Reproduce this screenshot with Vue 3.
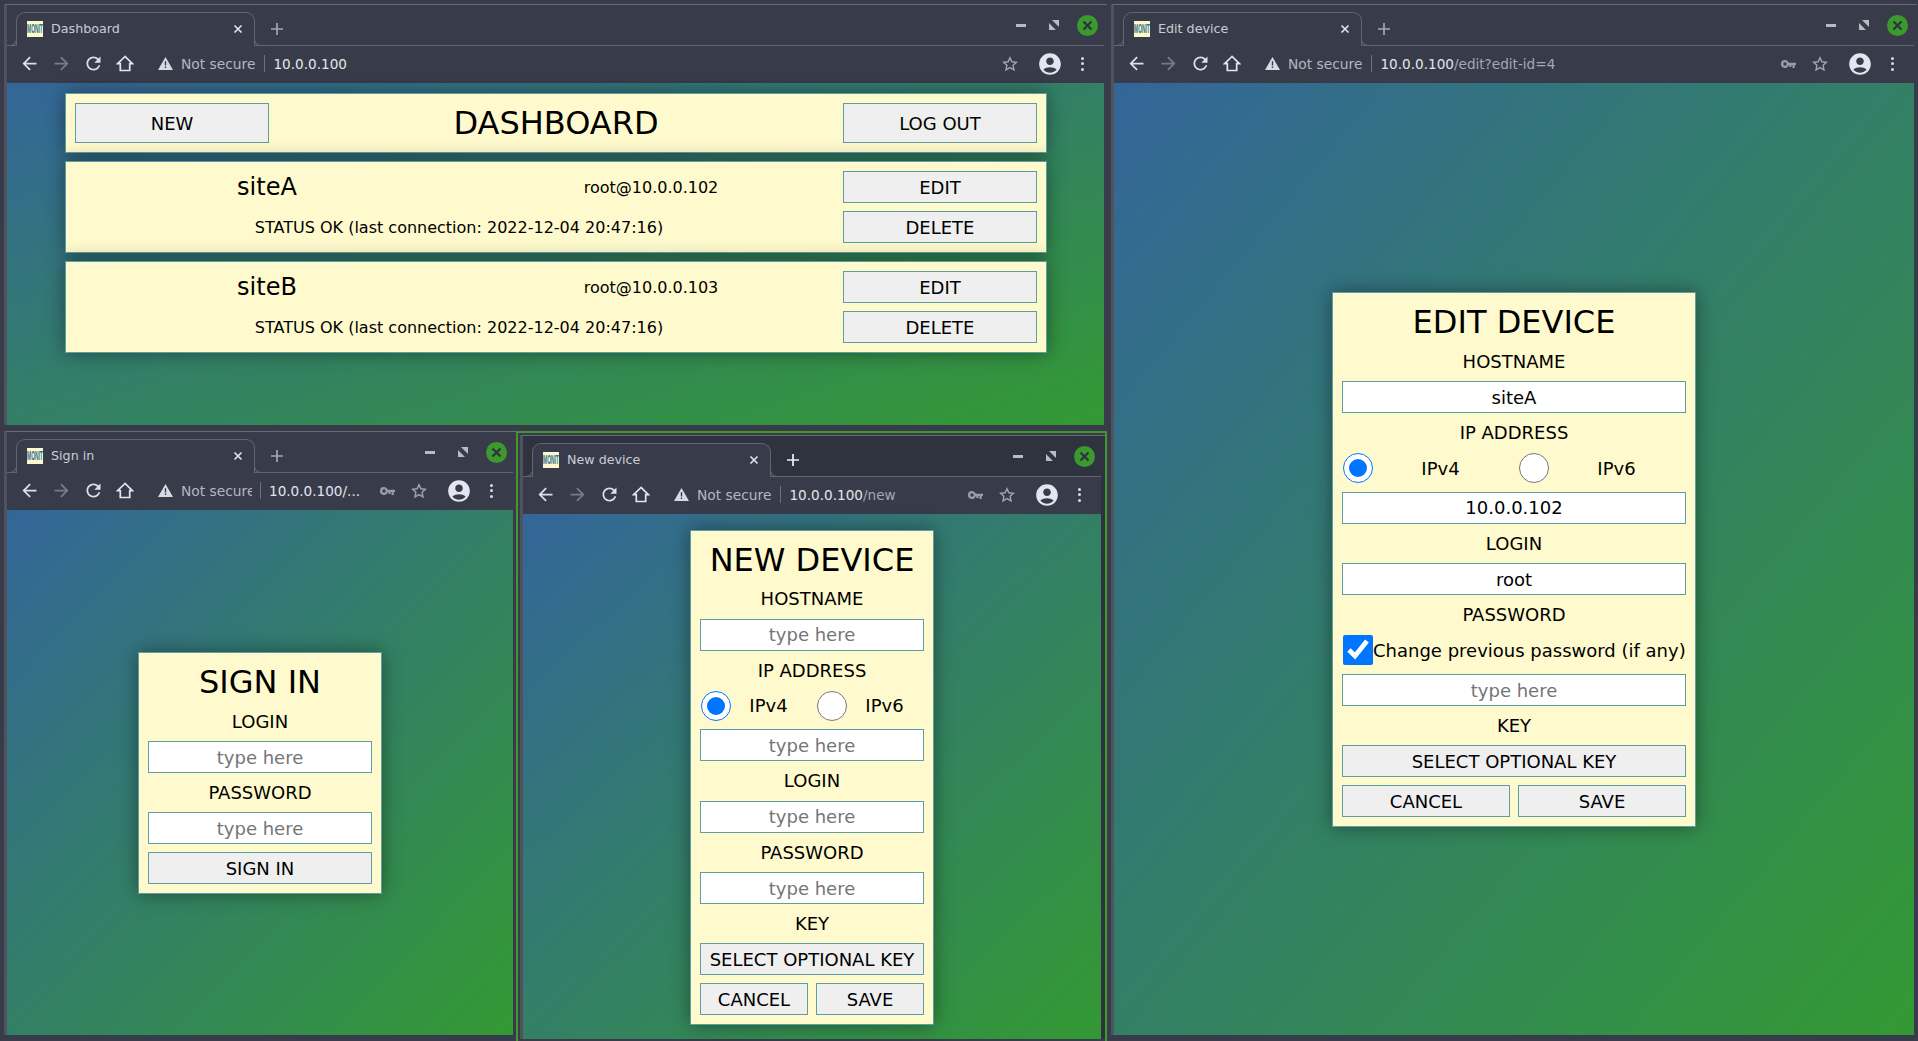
<script setup>
const windows = [
    { id: "dashboard", title: "Dashboard", host: "10.0.0.100", path: "" },
    { id: "edit", title: "Edit device", host: "10.0.0.100", path: "/edit?edit-id=4", hasKey: true },
    { id: "signin", title: "Sign in", host: "10.0.0.100", path: "/...", hasKey: true, clipped: true },
    { id: "new", title: "New device", host: "10.0.0.100", path: "/new", hasKey: true, active: true },
];

const sites = [
    { name: "siteA", target: "root@10.0.0.102" },
    { name: "siteB", target: "root@10.0.0.103" },
];
const lastConnection = "STATUS OK (last connection: 2022-12-04 20:47:16)";

const forms = {
    new: { heading: "NEW DEVICE", hostname: "", address: "", login: "" },
    edit: { heading: "EDIT DEVICE", hostname: "siteA", address: "10.0.0.102", login: "root", changePassword: true },
};
</script>

<template>
    <div class="desktop">
        <section
            v-for="win in windows"
            :key="win.id"
            class="window"
            :class="['window-' + win.id, { active: win.active }]"
        >
            <div class="frame">
                <div class="tabstrip">
                    <div class="tab">
                        <svg class="favicon" viewBox="0 0 16 16" width="16" height="16">
                            <rect width="16" height="16" fill="#fff8cd" />
                            <text x="0.1" y="4.7" font-size="4.9" font-family="Liberation Sans, sans-serif" font-weight="bold" fill="#2b6f8c" transform="scale(1 2.5)">MONIT</text>
                        </svg>
                        <span class="tab-title">{{ win.title }}</span>
                        <svg class="tab-close" viewBox="0 0 10 10" width="10" height="10">
                            <path d="M1.5 1.5l7 7M8.5 1.5l-7 7" stroke="#dfe1ea" stroke-width="1.7" fill="none" />
                        </svg>
                    </div>
                    <svg class="tab-new" viewBox="0 0 12 12" width="12" height="12">
                        <path d="M6 0v12M0 6h12" stroke-width="1.7" fill="none" />
                    </svg>
                    <div class="controls">
                        <span class="minimize"></span>
                        <svg class="restore" viewBox="0 0 10 10" width="10" height="10">
                            <path d="M3 0h7v7zM0 3l7 7H0z" fill="#b9bbc3" />
                        </svg>
                        <svg class="close" viewBox="0 0 21 21" width="21" height="21">
                            <circle cx="10.5" cy="10.5" r="10.5" fill="#3b992e" />
                            <path d="M6.5 6.5l8 8M14.5 6.5l-8 8" stroke="#2f3340" stroke-width="2.3" fill="none" />
                        </svg>
                    </div>
                </div>

                <div class="toolbar">
                    <span class="tool">
                        <svg viewBox="0 0 24 24" width="21" height="21"><path fill="#dde0ea" d="M20 11H7.83l5.59-5.59L12 4l-8 8 8 8 1.41-1.41L7.83 13H20v-2z" /></svg>
                    </span>
                    <span class="tool">
                        <svg viewBox="0 0 24 24" width="21" height="21"><path fill="#797c88" d="M4 11h12.17l-5.59-5.59L12 4l8 8-8 8-1.41-1.41L16.17 13H4v-2z" /></svg>
                    </span>
                    <span class="tool">
                        <svg viewBox="0 0 24 24" width="21" height="21"><path fill="#dde0ea" d="M17.65 6.35C16.2 4.9 14.21 4 12 4c-4.42 0-7.99 3.58-7.99 8s3.57 8 7.99 8c3.73 0 6.84-2.55 7.73-6h-2.08c-.82 2.33-3.04 4-5.65 4-3.31 0-6-2.69-6-6s2.69-6 6-6c1.66 0 3.14.69 4.22 1.78L13 11h7V4l-2.35 2.35z" /></svg>
                    </span>
                    <span class="tool">
                        <svg viewBox="0 0 18 17" width="18" height="17"><path d="M9 1.5L1.6 8.6h2.7v6.9h9.4V8.6h2.7z" fill="none" stroke="#e4e6ef" stroke-width="1.7" /></svg>
                    </span>
                    <svg class="warning" viewBox="0 0 15 13" width="15" height="13">
                        <path d="M7.5 0L15 13H0z" fill="#d7d9e3" />
                        <path d="M6.8 4.2h1.4v4.4H6.8zM6.8 9.6h1.4V11H6.8z" fill="#383c4a" />
                    </svg>
                    <span class="not-secure">Not secure</span>
                    <span class="divider"></span>
                    <span class="url"><span class="host">{{ win.host }}</span><span class="path">{{ win.path }}</span></span>
                    <div class="tool-right">
                        <span v-if="win.hasKey" class="tool">
                            <svg viewBox="0 0 15 8" width="15" height="8">
                                <path fill="#9a9ca8" d="M4 0a4 4 0 0 1 3.8 2.7H15v2.2h-1.3V8h-2.2V4.9h-1V7H8.3V4.9h-.5A4 4 0 1 1 4 0zm0 2.3a1.7 1.7 0 1 0 0 3.4 1.7 1.7 0 0 0 0-3.4z" />
                            </svg>
                        </span>
                        <span class="tool star-tool">
                            <svg viewBox="0 0 16 16" width="16" height="16">
                                <path d="M8 1.7l1.9 4.1 4.5.5-3.3 3 .9 4.5L8 11.6l-4 2.2.9-4.5-3.3-3 4.5-.5z" fill="none" stroke="#a2a4ae" stroke-width="1.4" />
                            </svg>
                        </span>
                        <span class="tool">
                            <svg viewBox="0 0 24 24" width="26" height="26">
                                <path fill="#e3e5f0" fill-rule="evenodd" d="M12 2C6.48 2 2 6.48 2 12s4.48 10 10 10 10-4.48 10-10S17.52 2 12 2zm0 4c1.93 0 3.5 1.57 3.5 3.5S13.93 13 12 13s-3.5-1.57-3.5-3.5S10.07 6 12 6zm0 14c-2.03 0-4.43-.82-6.14-2.88C7.55 15.8 9.68 15 12 15s4.45.8 6.14 2.12C16.43 19.18 14.03 20 12 20z" />
                            </svg>
                        </span>
                        <span class="tool dots"><i></i><i></i><i></i></span>
                    </div>
                </div>

                <main class="page">
                    <div v-if="win.id === 'dashboard'" class="dashboard">
                        <header class="card dash-head">
                            <button class="btn">NEW</button>
                            <h1>DASHBOARD</h1>
                            <button class="btn">LOG OUT</button>
                        </header>
                        <article v-for="site in sites" :key="site.name" class="card site">
                            <div class="site-info">
                                <span class="site-name">{{ site.name }}</span>
                                <span class="site-target">{{ site.target }}</span>
                                <span class="site-status">{{ lastConnection }}</span>
                            </div>
                            <div class="site-actions">
                                <button class="btn">EDIT</button>
                                <button class="btn">DELETE</button>
                            </div>
                        </article>
                    </div>

                    <form v-else-if="win.id === 'signin'" class="card form form-signin">
                        <h1>SIGN IN</h1>
                        <label>LOGIN</label>
                        <input type="text" placeholder="type here" />
                        <label>PASSWORD</label>
                        <input type="text" placeholder="type here" />
                        <button type="button" class="btn">SIGN IN</button>
                    </form>

                    <form v-else class="card form" :class="'form-' + win.id">
                        <h1>{{ forms[win.id].heading }}</h1>
                        <label>HOSTNAME</label>
                        <input type="text" placeholder="type here" :value="forms[win.id].hostname" />
                        <label>IP ADDRESS</label>
                        <div class="radios">
                            <input type="radio" :name="'ip-' + win.id" checked />
                            <span>IPv4</span>
                            <input type="radio" :name="'ip-' + win.id" />
                            <span>IPv6</span>
                        </div>
                        <input type="text" placeholder="type here" :value="forms[win.id].address" />
                        <label>LOGIN</label>
                        <input type="text" placeholder="type here" :value="forms[win.id].login" />
                        <label>PASSWORD</label>
                        <div v-if="forms[win.id].changePassword" class="change-password">
                            <input type="checkbox" checked />
                            <span>Change previous password (if any)</span>
                        </div>
                        <input type="text" placeholder="type here" />
                        <label>KEY</label>
                        <button type="button" class="btn">SELECT OPTIONAL KEY</button>
                        <div class="form-actions">
                            <button type="button" class="btn">CANCEL</button>
                            <button type="button" class="btn">SAVE</button>
                        </div>
                    </form>
                </main>
            </div>
        </section>
    </div>
</template>

<style>
html,
body {
    margin: 0;
    background: #383c4a;
}
</style>

<style scoped>
.desktop {
    position: relative;
    width: 1918px;
    height: 1041px;
    overflow: hidden;
    background: #383c4a;
    font-family: "DejaVu Sans", sans-serif;
}

/* windows sit on a free desktop */
.window {
    position: absolute;
    box-sizing: border-box;
    display: flex;
}

.window-dashboard {
    left: 4px;
    top: 4px;
    width: 1103px;
    height: 421px;
}

.window-edit {
    left: 1111px;
    top: 4px;
    width: 806px;
    height: 1031px;
}

.window-signin {
    left: 4px;
    top: 431px;
    width: 512px;
    height: 604px;
}

.window-new {
    left: 516px;
    top: 431px;
    width: 591px;
    height: 610px;
    border: 2px solid #3f9a2c;
    border-bottom: none;
    padding: 2px 0 2px 2px;
}

.frame {
    flex: 1;
    min-width: 0;
    display: flex;
    flex-direction: column;
    box-sizing: border-box;
    border-top: 1px solid #696b72;
    border-left: 3px solid #50525c;
    padding-right: 3px;
    background: #383c4a;
}

.active .frame {
    padding-right: 4px;
    background: #2f3340;
}

.tabstrip {
    display: flex;
    flex: none;
    height: 41px;
    box-sizing: border-box;
    border-bottom: 1px solid #62656f;
}

.tab {
    position: relative;
    display: flex;
    align-items: center;
    box-sizing: border-box;
    width: 239px;
    height: 34px;
    margin: 7px 0 0 9px;
    padding: 0 0 1px 10px;
    border: 1px solid #62656f;
    border-bottom: none;
    border-radius: 9px 9px 0 0;
    background: #383c4a;
}

.tab::before,
.tab::after {
    content: "";
    position: absolute;
    bottom: 0;
    width: 7px;
    height: 7px;
    border-bottom: 1px solid #62656f;
}

.tab::before {
    left: -8px;
    border-right: 1px solid #62656f;
    border-bottom-right-radius: 7px;
}

.tab::after {
    right: -8px;
    border-left: 1px solid #62656f;
    border-bottom-left-radius: 7px;
}

.tab-title {
    margin: 0 0 1px 8px;
    flex: 1;
    font-size: 12.7px;
    color: #c9ccd7;
}

.tab-close {
    margin-right: 11px;
}

.tab-new {
    margin: 18px 0 0 16px;
    stroke: #a3a6b1;
}

.active .tab-new {
    stroke: #f0f1f5;
}

.controls {
    display: flex;
    align-items: center;
    margin-left: auto;
    padding-right: 6px;
    height: 40px;
}

.minimize {
    width: 10px;
    height: 3px;
    background: #b9bbc3;
}

.restore {
    margin-left: 23px;
}

.close {
    margin-left: 18px;
}

.toolbar {
    display: flex;
    align-items: center;
    flex: none;
    box-sizing: border-box;
    height: 37px;
    padding: 0 0 1.5px 6px;
    background: #383c4a;
}

.tool {
    display: flex;
    align-items: center;
    justify-content: center;
    width: 32px;
    height: 32px;
}

.warning {
    margin-left: 16.5px;
}

.not-secure {
    margin-left: 8.5px;
    font-size: 13.8px;
    color: #b4b7c2;
    white-space: nowrap;
}

.window-signin .not-secure {
    width: 71px;
    overflow: hidden;
    margin-right: -1px;
}

.divider {
    width: 1px;
    height: 17px;
    margin: 0 8px 0 9px;
    background: #6d707b;
}

.url {
    font-size: 13.6px;
    white-space: nowrap;
}

.host {
    color: #e2e4ec;
}

.path {
    color: #a5a8b3;
}

.window-signin .path {
    color: #e2e4ec;
}

.tool-right {
    display: flex;
    align-items: center;
    margin-left: auto;
    padding-right: 6px;
}

.star-tool {
    margin-right: 8px;
}

.dots {
    flex-direction: column;
    gap: 2.5px;
}

.dots i {
    width: 3px;
    height: 3px;
    border-radius: 50%;
    background: #d9dbe4;
}

.page {
    flex: 1;
    min-height: 0;
    display: flex;
    align-items: center;
    justify-content: center;
    box-sizing: border-box;
    padding-top: 1.6px;
    background: linear-gradient(to bottom right, #336699, #339933);
}

.window-new .page {
    padding-top: 2px;
}

.card {
    box-sizing: border-box;
    border: 1px solid #5f9ea0;
    background: #fffacd;
    box-shadow: 0 0 18px rgba(0, 0, 0, 0.4);
    font-size: 18px;
    color: #000;
}

h1 {
    margin: 0;
    padding-top: 2px;
    font-size: 32px;
    font-weight: normal;
    line-height: 37px;
    text-align: center;
}

.btn {
    box-sizing: border-box;
    height: 32px;
    padding: 0;
    border: 1px solid #5f9ea0;
    background: #efefef;
    color: #000;
    font: 18px "DejaVu Sans", sans-serif;
}

/* dashboard */
.dashboard {
    align-self: flex-start;
    display: flex;
    flex-direction: column;
    gap: 8px;
    width: 982px;
    margin: 8.4px 0 0 1px;
}

.dash-head {
    display: flex;
    align-items: center;
    height: 60px;
    padding: 0.8px 9px 0;
}

.dash-head h1 {
    flex: 1;
    padding-top: 0;
}

.dash-head .btn {
    width: 194px;
    height: 40px;
}

.site {
    display: flex;
    height: 92px;
    padding: 9.4px 9px 8.6px;
}

.site-info {
    flex: 1;
    display: grid;
    grid-template-columns: 1fr 1fr;
    grid-template-rows: 32px 32px;
    gap: 8px;
    align-items: center;
    text-align: center;
    padding: 0 4px;
    font-size: 16px;
}

.site-name {
    font-size: 24px;
}

.site-status {
    grid-column: 1 / 3;
}

.site-actions {
    display: flex;
    flex-direction: column;
    gap: 8px;
    width: 194px;
}

/* forms */
.form {
    display: flex;
    flex-direction: column;
    gap: 8px;
    padding: 9px;
    text-align: center;
}

.form h1 {
    margin-bottom: 0.7px;
}

.form label {
    line-height: 23.3px;
}

.form-new,
.form-signin {
    width: 244px;
}

.form-edit {
    width: 364px;
}

.form input[type="text"] {
    box-sizing: border-box;
    width: 100%;
    height: 32px;
    padding: 0;
    border: 1px solid #5f9ea0;
    border-radius: 0;
    outline: none;
    background: #fff;
    color: #000;
    font: 18px "DejaVu Sans", sans-serif;
    text-align: center;
}

.radios {
    display: grid;
    grid-template-columns: 30px 1fr 30px 1fr;
    gap: 8px;
    align-items: center;
    height: 31.5px;
}

.radios input,
.change-password input {
    width: 30px;
    height: 30px;
    margin: 0 0 0 1px;
}

.radios span {
    padding-right: 9px;
}

.change-password {
    display: flex;
    align-items: center;
    height: 31.5px;
}

.change-password span {
    white-space: nowrap;
}

.form-actions {
    display: grid;
    grid-template-columns: 1fr 1fr;
    gap: 8px;
}
</style>
